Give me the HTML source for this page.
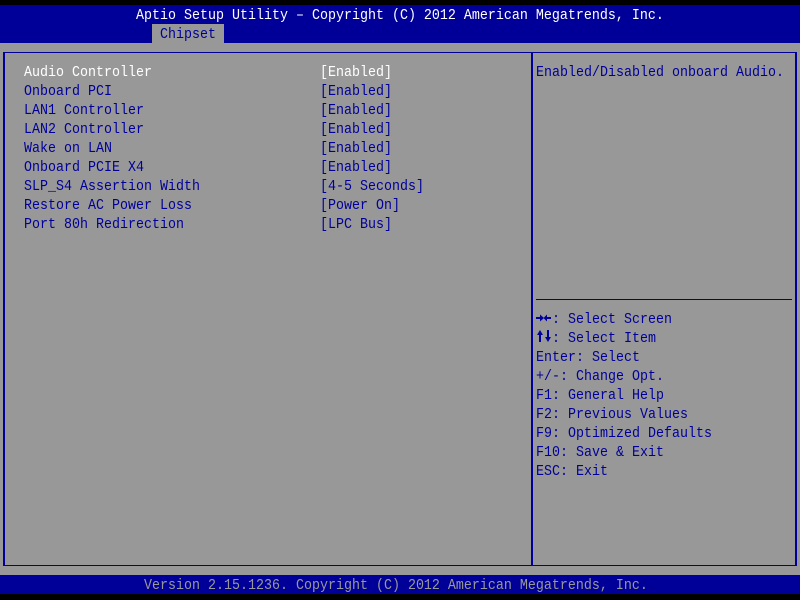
<!DOCTYPE html>
<html><head><meta charset="utf-8"><style>
html,body{margin:0;padding:0;background:#000}
#p{position:relative;width:800px;height:600px;overflow:hidden;background:#000}
.r{position:absolute}
.t{position:absolute;font:13.333px/19px "Liberation Mono","DejaVu Sans Mono",monospace;color:#000098;white-space:pre;height:19px;transform-origin:0 13px;transform:translateY(2px) scaleY(1.13)}
.b{background:#000098}
.t.w{color:#fff}
.t.g{color:#989898}
</style></head><body><div id="p">
<div class="r" style="left:0;top:5px;width:800px;height:38px;background:#000098"></div>
<div class="r" style="left:0;top:43px;width:800px;height:532px;background:#989898"></div>
<div class="r" style="left:0;top:575px;width:800px;height:19px;background:#000098"></div>
<div class="r" style="left:152px;top:24px;width:72px;height:19px;background:#989898"></div>
<div class="r b" style="left:3px;top:52px;width:794px;height:1px"></div>
<div class="r b" style="left:3px;top:565px;width:794px;height:1px"></div>
<div class="r b" style="left:3px;top:52px;width:2px;height:514px"></div>
<div class="r b" style="left:795px;top:52px;width:2px;height:514px"></div>
<div class="r b" style="left:531px;top:52px;width:2px;height:514px"></div>
<div class="r b" style="left:536px;top:299px;width:256px;height:1px"></div>

<div class="t w" style="left:136px;top:5px">Aptio Setup Utility – Copyright (C) 2012 American Megatrends, Inc.</div>
<div class="t" style="left:160px;top:24px">Chipset</div>

<div class="t w" style="left:24px;top:62px">Audio Controller</div>
<div class="t" style="left:24px;top:81px">Onboard PCI</div>
<div class="t" style="left:24px;top:100px">LAN1 Controller</div>
<div class="t" style="left:24px;top:119px">LAN2 Controller</div>
<div class="t" style="left:24px;top:138px">Wake on LAN</div>
<div class="t" style="left:24px;top:157px">Onboard PCIE X4</div>
<div class="t" style="left:24px;top:176px">SLP_S4 Assertion Width</div>
<div class="t" style="left:24px;top:195px">Restore AC Power Loss</div>
<div class="t" style="left:24px;top:214px">Port 80h Redirection</div>

<div class="t w" style="left:320px;top:62px">[Enabled]</div>
<div class="t" style="left:320px;top:81px">[Enabled]</div>
<div class="t" style="left:320px;top:100px">[Enabled]</div>
<div class="t" style="left:320px;top:119px">[Enabled]</div>
<div class="t" style="left:320px;top:138px">[Enabled]</div>
<div class="t" style="left:320px;top:157px">[Enabled]</div>
<div class="t" style="left:320px;top:176px">[4-5 Seconds]</div>
<div class="t" style="left:320px;top:195px">[Power On]</div>
<div class="t" style="left:320px;top:214px">[LPC Bus]</div>

<div class="t" style="left:536px;top:62px">Enabled/Disabled onboard Audio.</div>

<svg class="r" style="left:536px;top:312px" width="16" height="32" viewBox="0 0 16 32" fill="#000098">
<path d="M0 5h4V2.5L8 6 4 9.500V7H0z"/>
<path d="M15 5h-4V2.500L7.500 6 11 9.500V7h4z"/>
<path d="M4 18l3 5H5v7H3v-7H1z"/>
<path d="M12 30l-3-5h2v-7h2v7h2z"/>
</svg>
<div class="t" style="left:552px;top:309px">: Select Screen</div>
<div class="t" style="left:552px;top:328px">: Select Item</div>
<div class="t" style="left:536px;top:347px">Enter: Select</div>
<div class="t" style="left:536px;top:366px">+/-: Change Opt.</div>
<div class="t" style="left:536px;top:385px">F1: General Help</div>
<div class="t" style="left:536px;top:404px">F2: Previous Values</div>
<div class="t" style="left:536px;top:423px">F9: Optimized Defaults</div>
<div class="t" style="left:536px;top:442px">F10: Save &amp; Exit</div>
<div class="t" style="left:536px;top:461px">ESC: Exit</div>

<div class="t g" style="left:144px;top:575px">Version 2.15.1236. Copyright (C) 2012 American Megatrends, Inc.</div>
</div></body></html>
